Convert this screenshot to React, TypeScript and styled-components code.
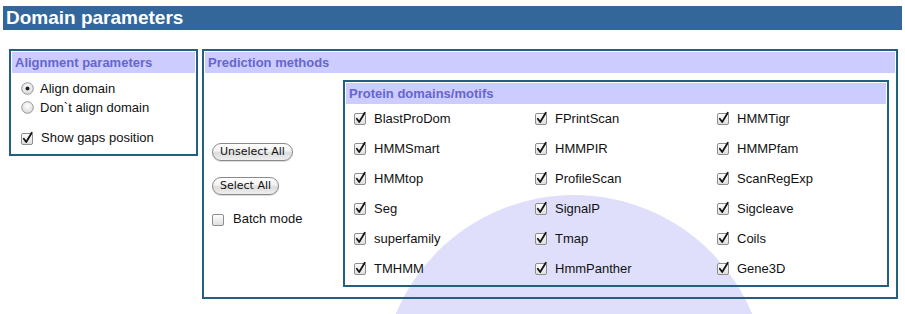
import styled, { createGlobalStyle } from 'styled-components';

const GlobalStyle = createGlobalStyle`
    html, body {
        margin: 0;
        background: #fff;
    }
    body {
        font-family: "Liberation Sans", Arial, sans-serif;
        font-size: 13px;
        color: #111;
    }
`

const methods = [
    'BlastProDom', 'FPrintScan', 'HMMTigr',
    'HMMSmart', 'HMMPIR', 'HMMPfam',
    'HMMtop', 'ProfileScan', 'ScanRegExp',
    'Seg', 'SignalP', 'Sigcleave',
    'superfamily', 'Tmap', 'Coils',
    'TMHMM', 'HmmPanther', 'Gene3D',
]

function CheckBox({ checked }: { checked: boolean }) {
    return (
        <svg width="14" height="14" viewBox="0 0 14 14">
            <defs>
                <linearGradient id="cbfill" x1="0" y1="0" x2="0" y2="1">
                    <stop offset="0" stopColor="#ffffff" />
                    <stop offset="1" stopColor="#dedede" />
                </linearGradient>
            </defs>
            <rect x="0.5" y="2.5" width="11" height="11" rx="1.5" fill="url(#cbfill)" stroke="#8d8d8d" />
            {checked && (
                <path d="M2.8 7.8 L5.2 11 L10.8 1.8" fill="none" stroke="#151515" strokeWidth="1.8" strokeLinejoin="round" strokeLinecap="round" />
            )}
        </svg>
    )
}

function Radio({ checked }: { checked: boolean }) {
    return (
        <svg width="13" height="13" viewBox="0 0 13 13">
            <defs>
                <radialGradient id="rdfill" cx="0.5" cy="0.35" r="0.7">
                    <stop offset="0" stopColor="#ffffff" />
                    <stop offset="1" stopColor="#d6d6d6" />
                </radialGradient>
            </defs>
            <circle cx="6.5" cy="6.5" r="5.8" fill="url(#rdfill)" stroke="#959595" />
            {checked && <circle cx="6.5" cy="6.5" r="2" fill="#222" />}
        </svg>
    )
}

export default function App() {
    return (
        <Page>
            <GlobalStyle />
            <Backdrop />
            <TitleBar>Domain parameters</TitleBar>
            <Panels>
                <Box $width="189px">
                    <SectionHead>Alignment parameters</SectionHead>
                    <OptionList>
                        <Option><Radio checked />Align domain</Option>
                        <Option><Radio checked={false} />Don`t align domain</Option>
                        <Option $gap="11px"><CheckBox checked />Show gaps position</Option>
                    </OptionList>
                </Box>
                <Box $width="auto" $grow>
                    <SectionHead>Prediction methods</SectionHead>
                    <PredictionBody>
                        <SideControls>
                            <PillButton>Unselect All</PillButton>
                            <PillButton>Select All</PillButton>
                            <Option><CheckBox checked={false} />Batch mode</Option>
                        </SideControls>
                        <Box $width="546px">
                            <SectionHead>Protein domains/motifs</SectionHead>
                            <MethodGrid>
                                {methods.map(m => (
                                    <MethodItem key={m}><CheckBox checked />{m}</MethodItem>
                                ))}
                            </MethodGrid>
                        </Box>
                    </PredictionBody>
                </Box>
            </Panels>
        </Page>
    )
}

const Page = styled.div`
    position: relative;
    height: 314px;
    overflow: hidden;
    padding: 6px 3px 0;
    box-sizing: border-box;
`

const Backdrop = styled.div`
    position: absolute;
    left: 381px;
    top: 195px;
    width: 386px;
    height: 386px;
    border-radius: 50%;
    background: #dfdffb;
    z-index: 0;
`

const TitleBar = styled.div`
    position: relative;
    height: 24px;
    line-height: 24px;
    padding-left: 3px;
    background: #336699;
    color: #fff;
    font-weight: bold;
    font-size: 19px;
`

const Panels = styled.div`
    position: relative;
    z-index: 1;
    display: flex;
    align-items: flex-start;
    gap: 4px;
    margin-top: 19px;
    padding: 0 6px;
`

const Box = styled.div<{ $width: string; $grow?: boolean }>`
    box-sizing: border-box;
    width: ${p => p.$width};
    flex: ${p => (p.$grow ? '1' : 'none')};
    border: 2px solid #22607f;
    padding: 1px;
`

const SectionHead = styled.div`
    height: 21px;
    line-height: 21px;
    padding-left: 3px;
    background: #ccccff;
    color: #6666cc;
    font-weight: bold;
    font-size: 13px;
`

const OptionList = styled.div`
    display: flex;
    flex-direction: column;
    padding: 6px 0 6px 9px;
`

const Option = styled.label<{ $gap?: string }>`
    display: flex;
    align-items: center;
    gap: 6px;
    height: 19px;
    margin-top: ${p => p.$gap || '0'};
    white-space: nowrap;
    svg {
        flex: none;
    }
`

const PredictionBody = styled.div`
    display: flex;
    padding: 7px 6px 9px 6px;
`

const SideControls = styled.div`
    width: 132px;
    flex: none;
    display: flex;
    flex-direction: column;
    align-items: flex-start;
    justify-content: center;
    gap: 16px;
    padding: 4px 0 0 1px;
    box-sizing: border-box;
    ${Option} {
        margin-top: -2px;
        gap: 7px;
    }
`

const PillButton = styled.button`
    height: 18px;
    padding: 0 7px;
    border: 1px solid #8a8a8a;
    border-radius: 9px;
    background: linear-gradient(#ffffff 0%, #f1f1f1 45%, #dcdcdc 55%, #eeeeee 100%);
    font-family: "DejaVu Sans", "Liberation Sans", sans-serif;
    font-size: 11px;
    line-height: 16px;
    color: #111;
    box-shadow: 0 1px 1px rgba(0, 0, 0, 0.15);
`

const MethodGrid = styled.div`
    display: grid;
    grid-template-columns: 181px 182px 1fr;
    grid-auto-rows: 30px;
    padding-left: 8px;
    margin-top: -1px;
    margin-bottom: 1px;
`

const MethodItem = styled.label`
    display: flex;
    align-items: center;
    gap: 6px;
    white-space: nowrap;
`
